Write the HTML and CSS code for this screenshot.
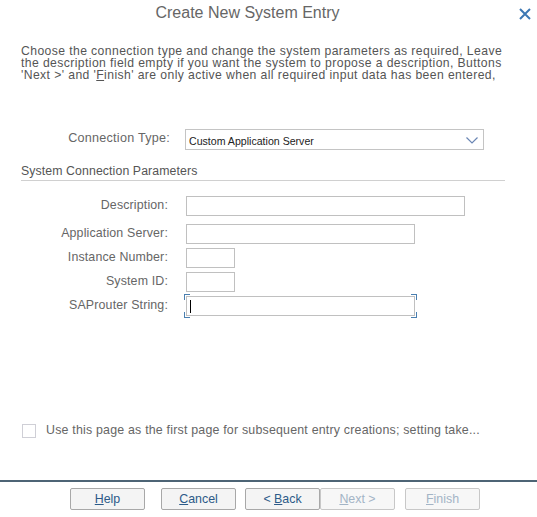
FILE: index.html
```html
<!DOCTYPE html>
<html>
<head>
<meta charset="utf-8">
<link rel="stylesheet" href="styles.css">
</head>
<body>
<div class="dialog">
  <div class="header">
    <div class="title">Create New System Entry</div>
    <div class="close">
      <svg width="12" height="12" viewBox="0 0 12 12"><path d="M1 1L11 11M11 1L1 11" stroke="#3d78b4" stroke-width="2" fill="none"/></svg>
    </div>
  </div>
  <p class="intro">Choose the connection type and change the system parameters as required, Leave<br>the description field empty if you want the system to propose a description, Buttons<br>'Next &gt;' and '<u>F</u>inish' are only active when all required input data has been entered,</p>
  <div class="conn-row">
    <div class="conn-label">Connection Type:</div>
    <div class="select">
      <span class="select-text">Custom Application Server</span>
      <svg width="12" height="7" viewBox="0 0 12 7"><path d="M0.5 0.5L6 6L11.5 0.5" stroke="#6a86b4" stroke-width="1.2" fill="none"/></svg>
    </div>
  </div>
  <div class="section-title">System Connection Parameters</div>
  <div class="fields">
    <div class="label">Description:</div>
    <div class="input w-desc"></div>
    <div class="label">Application Server:</div>
    <div class="input w-long"></div>
    <div class="label">Instance Number:</div>
    <div class="input w-short"></div>
    <div class="label">System ID:</div>
    <div class="input w-short"></div>
    <div class="label">SAProuter String:</div>
    <div class="input w-long focused">
      <span class="caret"></span>
      <span class="corner tl"></span><span class="corner tr"></span><span class="corner bl"></span><span class="corner br"></span>
    </div>
  </div>
  <div class="check-row">
    <span class="checkbox"></span>
    <span class="check-label">Use this page as the first page for subsequent entry creations; setting take...</span>
  </div>
  <div class="footer">
    <button class="btn b-help"><u>H</u>elp</button>
    <button class="btn b-cancel"><u>C</u>ancel</button>
    <button class="btn b-back">&lt; <u>B</u>ack</button>
    <button class="btn b-next disabled"><u>N</u>ext &gt;</button>
    <button class="btn b-finish disabled"><u>F</u>inish</button>
  </div>
</div>
</body>
</html>
```
FILE: styles.css
```css
html, body {
  margin: 0;
  padding: 0;
  background: #fff;
}
.dialog {
  width: 537px;
  height: 517px;
  font-family: "Liberation Sans", Arial, sans-serif;
  color: #5a5a5a;
  display: flex;
  flex-direction: column;
}
.header {
  display: flex;
  height: 26px;
  align-items: center;
}
.title {
  flex: 1;
  text-align: center;
  font-size: 16px;
  color: #666;
  line-height: 26px;
}
.close {
  width: 42px;
  display: flex;
  justify-content: flex-start;
  padding-left: 24px;
  box-sizing: border-box;
  padding-top: 2px;
}
.close svg { display: block; }
.intro {
  margin: 19px 0 0 21px;
  font-size: 12.2px;
  letter-spacing: 0.4px;
  line-height: 12px;
  color: #555;
  white-space: nowrap;
}
.conn-row {
  margin-top: 48px;
  display: flex;
  align-items: center;
}
.conn-label {
  width: 170px;
  text-align: right;
  font-size: 12.6px;
  letter-spacing: 0.25px;
  color: #666;
  margin-top: -4px;
}
.select {
  margin-left: 15px;
  width: 299px;
  height: 21px;
  box-sizing: border-box;
  border: 1px solid #c4c4c4;
  display: flex;
  align-items: center;
  justify-content: space-between;
  padding: 2px 5px 0 3px;
}
.select-text {
  font-size: 10.6px;
  color: #222;
}
.section-title {
  margin: 14px 0 0 21px;
  width: 484px;
  font-size: 12.3px;
  letter-spacing: 0.1px;
  color: #555;
  line-height: 14px;
  padding-bottom: 2px;
  border-bottom: 1px solid #d0d0d0;
}
.fields {
  margin-top: 15px;
  display: grid;
  grid-template-columns: 168px auto;
  column-gap: 18px;
  row-gap: 4px;
  align-items: center;
  justify-items: start;
}
.fields > :nth-child(2) { margin-bottom: 4px; }
.fields > :nth-child(1) { margin-bottom: 4px; }
.label {
  justify-self: end;
  font-size: 12.4px;
  letter-spacing: 0.15px;
  color: #666;
  margin-top: -3px;
}
.input {
  height: 20px;
  box-sizing: border-box;
  border: 1px solid #c0c0c0;
  position: relative;
}
.w-desc { width: 279px; }
.w-long { width: 229px; }
.w-short { width: 49px; }
.caret {
  position: absolute;
  left: 3px;
  top: 3px;
  width: 1px;
  height: 13px;
  background: #000;
}
.corner {
  position: absolute;
  width: 5px;
  height: 5px;
  border-color: #4a7fb0;
  border-style: solid;
  border-width: 0;
}
.corner.tl { left: -3px; top: -3px; border-left-width: 1px; border-top-width: 1px; }
.corner.tr { right: -3px; top: -3px; border-right-width: 1px; border-top-width: 1px; }
.corner.bl { left: -3px; bottom: -3px; border-left-width: 1px; border-bottom-width: 1px; }
.corner.br { right: -3px; bottom: -3px; border-right-width: 1px; border-bottom-width: 1px; }
.check-row {
  margin-top: 107px;
  margin-left: 22px;
  display: flex;
  align-items: center;
  height: 15px;
}
.checkbox {
  width: 14px;
  height: 14px;
  box-sizing: border-box;
  border: 1px solid #cfcfd6;
}
.check-label {
  margin-left: 10px;
  font-size: 12.4px;
  letter-spacing: 0.2px;
  color: #666;
  margin-top: -2px;
}
.footer {
  margin-top: 42px;
  border-top: 2px solid #4d6475;
  padding-top: 6px;
  padding-left: 70px;
  display: flex;
}
.btn {
  width: 75px;
  height: 22px;
  box-sizing: border-box;
  border: 1px solid #a8a8a8;
  border-radius: 2px;
  background: #f4f4f4;
  font-family: "Liberation Sans", Arial, sans-serif;
  font-size: 12.4px;
  color: #2c5a88;
  padding: 0;
  margin: 0;
}
.btn u { text-decoration-thickness: 1px; text-underline-offset: 1px; }
.b-cancel { margin-left: 16px; }
.b-back { margin-left: 9px; }
.b-finish { margin-left: 10px; }
.btn.disabled {
  color: #a3b4c6;
  border-color: #c8c8c8;
  background: #f7f7f7;
}
```
